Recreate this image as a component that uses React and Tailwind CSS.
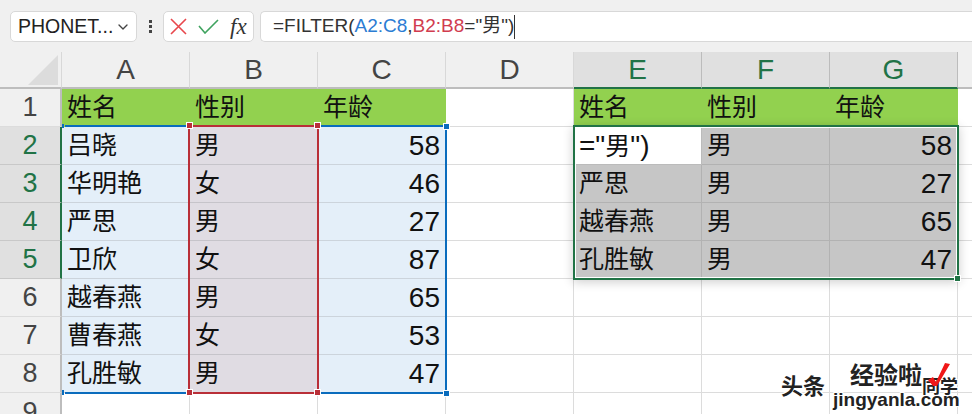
import { ChevronDown } from 'lucide-react';

const cols = ['A', 'B', 'C', 'D', 'E', 'F', 'G'];
const left = [
  ['姓名', '性别', '年龄'],
  ['吕晓', '男', 58],
  ['华明艳', '女', 46],
  ['严思', '男', 27],
  ['卫欣', '女', 87],
  ['越春燕', '男', 65],
  ['曹春燕', '女', 53],
  ['孔胜敏', '男', 47],
];
const right = [
  ['姓名', '性别', '年龄'],
  [
    <span key="f" className="text-[28px]">
      ="<span className="text-[25px]">男</span>")
    </span>,
    '男',
    58,
  ],
  ['严思', '男', 27],
  ['越春燕', '男', 65],
  ['孔胜敏', '男', 47],
];

const font = "font-['Liberation_Sans','Noto_Sans_CJK_SC',sans-serif]";
const outline = '[text-shadow:1px_1px_0_#fff,-1px_-1px_0_#fff,1px_-1px_0_#fff,-1px_1px_0_#fff]';

function Cell({ value, fill }) {
  const isNumber = typeof value === 'number';
  return (
    <div
      className={`h-[38px] w-[128px] shrink-0 border-b border-r flex items-center px-[5px] leading-none text-[#111] ${
        isNumber ? 'justify-end text-[28px]' : 'text-[25px]'
      } ${fill}`}
    >
      {value}
    </div>
  );
}

function Handle({ className }) {
  return <div className={`absolute w-[7px] h-[7px] border border-white ${className}`} />;
}

function App() {
  return (
    <div className={`relative w-[972px] h-[414px] overflow-hidden bg-white ${font}`}>
      {/* formula bar */}
      <div className="h-[52px] bg-[#f0f0f0] flex items-center pl-[10px] pt-px">
        <div className="w-[127px] h-[31px] bg-white border border-[#d8d8d8] rounded-[5px] flex items-center justify-between pl-[7px] pr-[5px] text-[19.5px] text-[#222]">
          <span>PHONET...</span>
          <ChevronDown className="w-[16px] h-[16px] text-[#444]" />
        </div>
        <div className="w-[26px] flex flex-col items-center gap-[2px]">
          <span className="w-[3px] h-[3px] bg-[#444]" />
          <span className="w-[3px] h-[3px] bg-[#444]" />
          <span className="w-[3px] h-[3px] bg-[#444]" />
        </div>
        <div className="w-[91px] h-[31px] bg-white border border-[#d8d8d8] rounded-[5px] flex items-center pl-[6px]">
          <svg width="17" height="17" viewBox="0 0 17 17">
            <path d="M1 1 L16 16 M16 1 L1 16" stroke="#e8474c" strokeWidth="1.6" fill="none" />
          </svg>
          <svg className="ml-[11px]" width="21" height="15" viewBox="0 0 21 15">
            <path d="M1 7 L7 14 L20 1" stroke="#3fa35f" strokeWidth="1.6" fill="none" />
          </svg>
          <span className="ml-[11px] text-[23px] leading-none italic text-[#333] font-['Liberation_Serif',serif]">fx</span>
        </div>
        <div className="ml-[6px] flex-1 h-[31px] bg-white border border-r-0 border-[#d8d8d8] rounded-l-[5px] flex items-center pl-[12px] text-[19px] text-[#333]">
          <span>=FILTER(</span>
          <span className="text-[#2b7cd3]">A2:C8</span>
          <span>,</span>
          <span className="text-[#d13c4f]">B2:B8</span>
          <span>="男")</span>
          <span className="w-px h-[24px] bg-[#333]" />
        </div>
      </div>

      {/* column headings */}
      <div className="flex h-[37px] bg-[#f0f0f0]">
        <div className="w-[62px] shrink-0 relative border-r border-b-2 border-r-[#d8d8d8] border-b-[#bdbdbd]">
          <svg className="absolute left-[28px] top-[3px]" width="30" height="30">
            <polygon points="30,0 30,30 0,30" fill="#dcdcdc" />
          </svg>
        </div>
        {cols.map((c, i) => (
          <div
            key={c}
            className={`w-[128px] shrink-0 flex items-center justify-center text-[28px] border-r border-b-2 ${
              i >= 4
                ? 'bg-[#e0e0e0] text-[#217346] border-r-[#bcbcbc] border-b-[#217346]'
                : 'text-[#444] border-r-[#d8d8d8] border-b-[#bdbdbd]'
            }`}
          >
            {c}
          </div>
        ))}
        <div className="flex-1 border-b-2 border-[#bdbdbd]" />
      </div>

      {/* rows */}
      {left.map((row, r) => {
        const rr = right[r];
        return (
          <div key={r} className="flex">
            <div
              className={`w-[62px] h-[38px] shrink-0 flex items-center justify-center text-[27px] border-r-2 border-b ${
                r >= 1 && r <= 4
                  ? 'bg-[#e0e0e0] text-[#217346] border-r-[#217346] border-b-[#c8c8c8]'
                  : 'bg-[#f0f0f0] text-[#444] border-r-[#bdbdbd] border-b-[#dcdcdc]'
              }`}
            >
              {r + 1}
            </div>
            {row.map((v, i) => (
              <Cell
                key={i}
                value={v}
                fill={
                  r === 0
                    ? 'bg-[#92d14f] border-[#92d14f]'
                    : i === 1
                      ? 'bg-[#e0dce3] border-[#c6c4ca]'
                      : 'bg-[#e4eff9] border-[#ccd4dc]'
                }
              />
            ))}
            <div className="w-[128px] h-[38px] shrink-0 border-b border-r border-[#dcdcdc]" />
            {rr
              ? rr.map((v, i) => (
                  <Cell
                    key={i}
                    value={v}
                    fill={
                      r === 0
                        ? 'bg-[#92d14f] border-[#92d14f]'
                        : r === 1 && i === 0
                          ? 'bg-white border-[#bbb]'
                          : 'bg-[#c6c6c6] border-[#b2b2b2]'
                    }
                  />
                ))
              : cols.slice(4).map((c) => (
                  <div key={c} className="w-[128px] h-[38px] shrink-0 border-b border-r border-[#dcdcdc]" />
                ))}
            <div className="flex-1 h-[38px] border-b border-[#dcdcdc]" />
          </div>
        );
      })}
      <div className="flex h-[30px]">
        <div className="w-[62px] shrink-0 bg-[#f0f0f0] border-r-2 border-[#bdbdbd] flex justify-center text-[27px] leading-[38px] text-[#444]">9</div>
        {cols.map((c) => (
          <div key={c} className="w-[128px] shrink-0 border-r border-[#dcdcdc]" />
        ))}
      </div>

      {/* range highlights over the sheet */}
      <div className="absolute left-[65px] top-[125px] w-[382px] h-[269px] border-2 border-l-0 border-[#0a6cbd]" />
      <div className="absolute left-[188px] top-[125px] w-[131px] h-[269px] border-2 border-[#b92f38]" />
      <div className="absolute left-[62px] top-[124px] w-[2px] h-[4px] bg-[#0a6cbd]" />
      <div className="absolute left-[62px] top-[390px] w-[2px] h-[5px] bg-[#0a6cbd]" />
      <Handle className="left-[443px] top-[123px] bg-[#0a6cbd]" />
      <Handle className="left-[443px] top-[390px] bg-[#0a6cbd]" />
      <Handle className="left-[186px] top-[122px] bg-[#b92f38]" />
      <Handle className="left-[314px] top-[122px] bg-[#b92f38]" />
      <Handle className="left-[186px] top-[389px] bg-[#b92f38]" />
      <Handle className="left-[314px] top-[389px] bg-[#b92f38]" />

      <div className="absolute left-[573px] top-[125px] w-[386px] h-[155px] border-2 border-[#217346] shadow-[0_2px_10px_rgba(0,0,0,0.2),inset_0_0_0_1px_#fff]" />
      <div className="absolute left-[954px] top-[275px] w-[7px] h-[7px] bg-[#217346] border border-white" />

      {/* watermark */}
      <div className={`absolute left-[781px] top-[376px] text-[22px] leading-none font-bold text-[#222] ${outline}`}>头条</div>
      <div className={`absolute left-[922px] top-[378px] text-[18px] leading-none font-bold text-[#222] ${outline}`}>同学</div>
      <div className={`absolute left-[850px] top-[364px] text-[24px] leading-none font-bold text-[#222] ${outline}`}>经验啦</div>
      <div className={`absolute left-[833px] top-[390px] text-[19px] leading-none font-bold text-[#222] ${outline}`}>jingyanla.com</div>
      <svg className="absolute left-[926px] top-[361px]" width="26" height="27" viewBox="0 0 26 27">
        <polygon points="2,19 7,16 10,21 19,2 24,3 11,25 7,25" fill="#f01818" />
      </svg>
    </div>
  );
}

export default App;
